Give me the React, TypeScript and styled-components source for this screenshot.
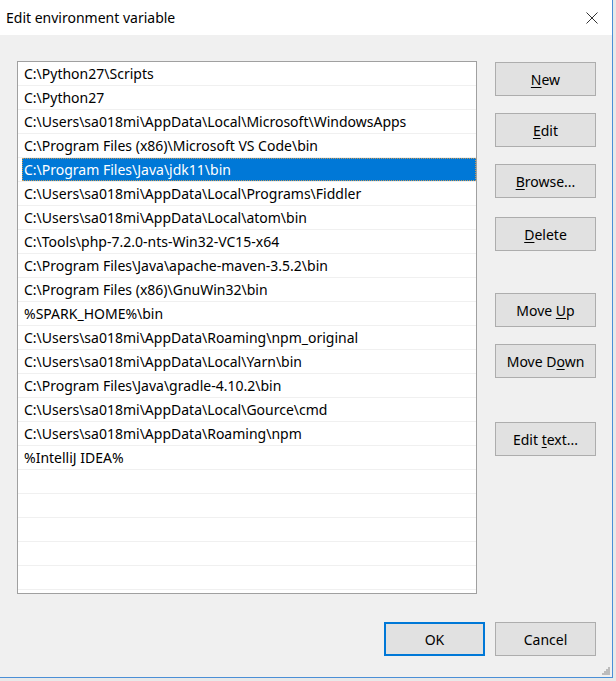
import React from "react";
import styled, { createGlobalStyle } from "styled-components";

const GlobalStyle = createGlobalStyle`
  html, body {
    margin: 0;
    padding: 0;
    background: #e9e9e9;
  }
  body {
    font-family: "Noto Sans", "Open Sans", sans-serif;
    font-size: 14px;
    color: #000;
  }
`;

const Window = styled.div`
  position: relative;
  width: 612px;
  height: 677px;
  background: #f0f0f0;
  border-right: 1px solid #4b8fd6;
  border-bottom: 1px solid #4b8fd6;
  display: flex;
  flex-flow: column nowrap;
`;

const TitleBar = styled.div`
  display: flex;
  flex-flow: row nowrap;
  align-items: center;
  justify-content: space-between;
  height: 35px;
  background: #fff;
  padding-left: 6px;
`;

const TitleText = styled.div`
  font-size: 14px;
  line-height: 35px;
`;

const CloseBox = styled.div`
  width: 41px;
  height: 35px;
  display: flex;
  align-items: center;
  justify-content: center;
`;

const Body = styled.div`
  display: flex;
  flex-flow: column nowrap;
  flex: 1;
  padding: 26px 16px 0 17px;
`;

const MainRow = styled.div`
  display: flex;
  flex-flow: row nowrap;
  gap: 18px;
`;

const ListBox = styled.div`
  width: 458px;
  height: 531px;
  border: 1px solid #a0a0a0;
  background: #fff;
  overflow: hidden;
  display: flex;
  flex-flow: column nowrap;
`;

const Row = styled.div`
  display: flex;
  flex: none;
  height: 24px;
  box-sizing: border-box;
  border-bottom: 1px solid #f0f0f0;
  padding-left: 4px;
`;

const RowCell = styled.div<{ $selected?: boolean }>`
  flex: 1;
  display: flex;
  align-items: center;
  padding-left: 2px;
  white-space: nowrap;
  background: ${(p) => (p.$selected ? "#0078d7" : "transparent")};
  color: ${(p) => (p.$selected ? "#fff" : "#000")};
  outline: ${(p) => (p.$selected ? "1px dotted #c49a5a" : "none")};
  outline-offset: -1px;
`;

const ButtonColumn = styled.div`
  display: flex;
  flex-flow: column nowrap;
  padding-top: 1px;
`;

const DialogButton = styled.button<{ $spaceBefore?: number; $primary?: boolean }>`
  width: 101px;
  height: 34px;
  margin-top: ${(p) => p.$spaceBefore ?? 0}px;
  background: #e1e1e1;
  border: ${(p) => (p.$primary ? "2px solid #0078d7" : "1px solid #adadad")};
  font-family: inherit;
  font-size: 14px;
  color: #000;
  padding: 0;

  u {
    text-decoration-thickness: 1px;
    text-underline-offset: 2px;
  }
`;

const Footer = styled.div`
  display: flex;
  flex-flow: row nowrap;
  justify-content: flex-end;
  gap: 10px;
  margin-top: 28px;
`;

const Grip = styled.svg`
  position: absolute;
  right: 2px;
  bottom: 2px;
`;

const paths = [
  "C:\\Python27\\Scripts",
  "C:\\Python27",
  "C:\\Users\\sa018mi\\AppData\\Local\\Microsoft\\WindowsApps",
  "C:\\Program Files (x86)\\Microsoft VS Code\\bin",
  "C:\\Program Files\\Java\\jdk11\\bin",
  "C:\\Users\\sa018mi\\AppData\\Local\\Programs\\Fiddler",
  "C:\\Users\\sa018mi\\AppData\\Local\\atom\\bin",
  "C:\\Tools\\php-7.2.0-nts-Win32-VC15-x64",
  "C:\\Program Files\\Java\\apache-maven-3.5.2\\bin",
  "C:\\Program Files (x86)\\GnuWin32\\bin",
  "%SPARK_HOME%\\bin",
  "C:\\Users\\sa018mi\\AppData\\Roaming\\npm_original",
  "C:\\Users\\sa018mi\\AppData\\Local\\Yarn\\bin",
  "C:\\Program Files\\Java\\gradle-4.10.2\\bin",
  "C:\\Users\\sa018mi\\AppData\\Local\\Gource\\cmd",
  "C:\\Users\\sa018mi\\AppData\\Roaming\\npm",
  "%IntelliJ IDEA%",
];

const SELECTED = 4;
const EMPTY_ROWS = 6;

function CloseIcon() {
  return (
    <svg width="12" height="12" viewBox="0 0 12 12">
      <path d="M0.5 0.5 L11.5 11.5 M11.5 0.5 L0.5 11.5" stroke="#333" strokeWidth="1" />
    </svg>
  );
}

function App() {
  return (
    <>
      <GlobalStyle />
      <Window>
        <TitleBar>
          <TitleText>Edit environment variable</TitleText>
          <CloseBox>
            <CloseIcon />
          </CloseBox>
        </TitleBar>
        <Body>
          <MainRow>
            <ListBox>
              {paths.map((p, i) => (
                <Row key={p}>
                  <RowCell $selected={i === SELECTED}>{p}</RowCell>
                </Row>
              ))}
              {Array.from({ length: EMPTY_ROWS }).map((_, i) => (
                <Row key={"empty" + i}>
                  <RowCell />
                </Row>
              ))}
            </ListBox>
            <ButtonColumn>
              <DialogButton>
                <u>N</u>ew
              </DialogButton>
              <DialogButton $spaceBefore={17}>
                <u>E</u>dit
              </DialogButton>
              <DialogButton $spaceBefore={17}>
                <u>B</u>rowse...
              </DialogButton>
              <DialogButton $spaceBefore={19}>
                <u>D</u>elete
              </DialogButton>
              <DialogButton $spaceBefore={42}>
                Move <u>U</u>p
              </DialogButton>
              <DialogButton $spaceBefore={17}>
                Move D<u>o</u>wn
              </DialogButton>
              <DialogButton $spaceBefore={44}>
                Edit <u>t</u>ext...
              </DialogButton>
            </ButtonColumn>
          </MainRow>
          <Footer>
            <DialogButton $primary>OK</DialogButton>
            <DialogButton>Cancel</DialogButton>
          </Footer>
        </Body>
        <Grip width="10" height="10" viewBox="0 0 10 10">
          {[
            [8, 0],
            [6, 2],
            [8, 2],
            [4, 4],
            [6, 4],
            [8, 4],
            [2, 6],
            [4, 6],
            [6, 6],
            [8, 6],
          ].map(([x, y]) => (
            <rect key={x + "-" + y} x={x} y={y + 2} width="2" height="2" fill="#bcbcbc" />
          ))}
        </Grip>
      </Window>
    </>
  );
}

export default App;
